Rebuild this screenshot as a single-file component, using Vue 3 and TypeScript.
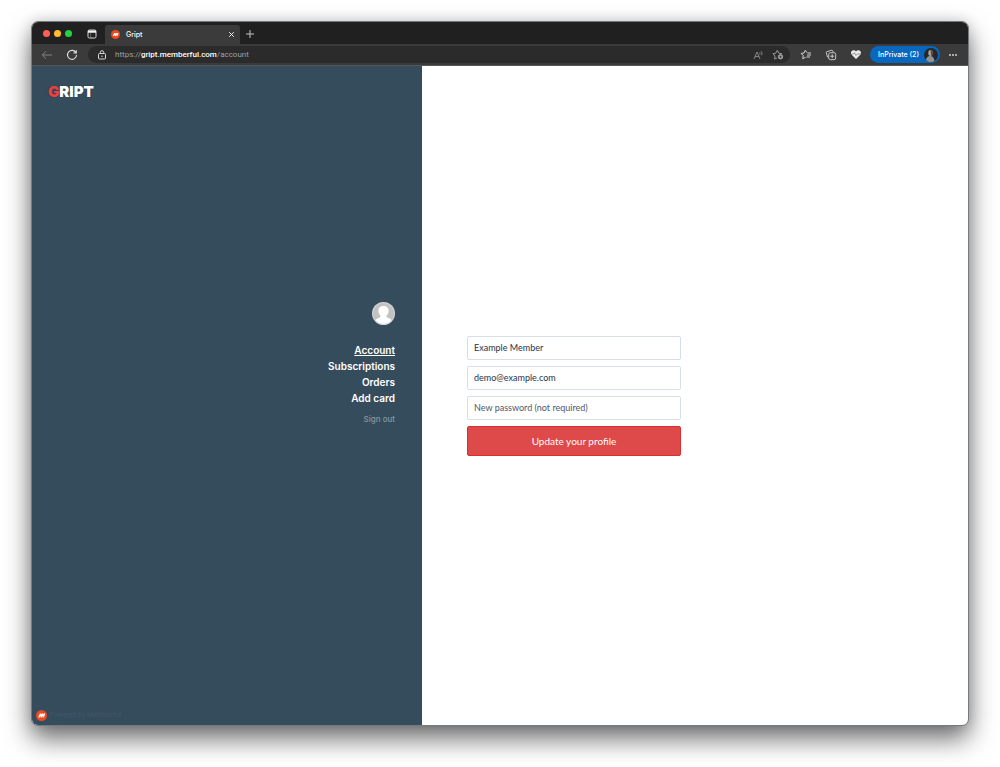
<script setup lang="ts">
import { ref } from 'vue'

interface NavItem {
  label: string
  active: boolean
}

const navItems: NavItem[] = [
  { label: 'Account', active: true },
  { label: 'Subscriptions', active: false },
  { label: 'Orders', active: false },
  { label: 'Add card', active: false },
]

const fullName = ref('Example Member')
const email = ref('demo@example.com')
const password = ref('')
</script>

<template>
  <div class="desktop">
    <div class="window">
      <header class="chrome">
        <div class="titlebar">
          <div class="lights">
            <button class="light close" aria-label="Close window"></button>
            <button class="light minimize" aria-label="Minimize window"></button>
            <button class="light zoom" aria-label="Zoom window"></button>
          </div>
          <button class="icon-button tab-menu" aria-label="Tab actions">
            <svg width="10" height="10" viewBox="0 0 10 10" fill="none">
              <rect x="1" y="1" width="8" height="8" rx="1.4" stroke="#d8d8d8" />
              <path d="M1 1.600h8v2.200H1z" fill="#f2f2f2" />
              <path d="M3.700 4v5" stroke="#999" stroke-width=".6" />
            </svg>
          </button>
          <div class="tab">
            <svg width="9" height="9" viewBox="0 0 20 20">
              <circle cx="10" cy="10" r="10" fill="#f0481f" />
              <path d="M4 13.500 7 6.500h2.300l-.6 2 1.900-2h2.200l-.6 2 2-2H17l-2.800 7h-2.300l1.300-3.300-3 3.300H8l1.300-3.300-3 3.300z" fill="#fff" />
            </svg>
            <span class="tab-title">Gript</span>
            <button class="icon-button tab-close" aria-label="Close tab">
              <svg width="7" height="7" viewBox="0 0 7 7" fill="none" stroke="#eee">
                <path d="m1.200 1.200 4.600 4.600M5.800 1.200 1.200 5.800" />
              </svg>
            </button>
          </div>
          <button class="icon-button new-tab" aria-label="New tab">
            <svg width="10" height="10" viewBox="0 0 10 10" fill="none" stroke="#c4c4c4">
              <path d="M5 1v8M1 5h8" />
            </svg>
          </button>
        </div>

        <div class="toolbar">
          <button class="icon-button back" aria-label="Back">
            <svg width="12" height="10" viewBox="0 0 12 10" fill="none" stroke="#858585">
              <path d="M11 5H1.500M5 1.300 1.300 5 5 8.700" />
            </svg>
          </button>
          <button class="icon-button reload" aria-label="Reload">
            <svg width="12" height="12" viewBox="0 0 12 12" fill="none" stroke="#dedede" stroke-width="1.1">
              <path d="M10 3.800A4.500 4.500 0 1 0 10.500 6M10.300 1.200V4H7.500" />
            </svg>
          </button>
          <div class="address">
            <svg width="10" height="10" viewBox="0 0 10 10" fill="none" stroke="#d8d8d8">
              <rect x="1.500" y="3.500" width="7" height="5.500" rx="1" />
              <path d="M3.300 3.500V2.400a1.700 1.700 0 0 1 3.400 0v1.100" />
              <circle cx="5" cy="6.200" r=".7" fill="#d8d8d8" stroke="none" />
            </svg>
            <a class="url" href="#account">https://<b>gript.memberful.com</b>/account</a>
            <button class="icon-button" aria-label="Read aloud">
              <svg width="11" height="10" viewBox="0 0 11 10" fill="none" stroke="#9b9b9b" stroke-width=".8">
                <path d="M1 9 4 2l3 7M2 6.600h4M6.500 2.600c.6.500.6 1.400.3 2M7.800 1.200c1.300 1 1.500 2.600.8 4" />
              </svg>
            </button>
            <button class="icon-button" aria-label="Add to favorites">
              <svg width="12" height="11" viewBox="0 0 12 11" fill="none" stroke="#a5a5a5" stroke-width=".9">
                <path d="M5 9 2.600 10l.4-3L1 4.700l2.700-.5L5.300 1.300l1.500 2.900 3.200.5" />
                <circle cx="8.500" cy="7.800" r="2.200" fill="#a5a5a5" />
                <path d="M8.500 6.600V9M7.300 7.800h2.400" stroke="#2b2b2b" stroke-width=".7" />
              </svg>
            </button>
          </div>
          <div class="actions">
            <button class="icon-button" aria-label="Favorites">
              <svg width="12" height="11" viewBox="0 0 12 11" fill="none" stroke="#d5d5d5" stroke-width="1">
                <path d="M7 3.700 5.300 1.300 4 4 1.200 4.400l2 2.200-.5 3L5.500 8.400M7.500 4h3.500M7 6h4M6.500 8H10" />
              </svg>
            </button>
            <button class="icon-button" aria-label="Collections">
              <svg width="12" height="12" viewBox="0 0 12 12" fill="none" stroke="#d5d5d5" stroke-width=".9">
                <path d="M3.300 8.500 2.500 8 1.300 4Q1 3 2 2.600L6.500 1.300q1-.2 1.400.7l.3 1" />
                <rect x="3.700" y="3.700" width="7" height="7" rx="1.700" />
                <path d="M7.200 5.200v4M5.200 7.200h4" />
              </svg>
            </button>
            <button class="icon-button" aria-label="Browser essentials">
              <svg width="12" height="11" viewBox="0 0 12 11">
                <path d="M6 10 1.700 5.800C.4 4.500.8 2 2.600 1.400 4 .9 5.300 1.500 6 2.500c.7-1 2-1.600 3.400-1.100 1.800.6 2.200 3.100.9 4.400z" fill="#ececec" />
                <path d="M1 5h2.500l1-1.300L6 6.500 7.300 5H11" fill="none" stroke="#777" stroke-width=".7" />
              </svg>
            </button>
          </div>
          <button class="profile">
            <span>InPrivate (2)</span>
            <svg width="14" height="14" viewBox="0 0 14 14">
              <circle cx="7" cy="7" r="7" fill="#272727" />
              <path d="M2 12c.5-3 2-4 4-4s4 1 4.500 5A7 7 0 0 1 2 12" fill="#929292" />
              <ellipse cx="6.500" cy="5" rx="2.200" ry="3" fill="#b5aaa3" />
              <path d="M6.500 2c3 0 3 5 .5 6z" fill="#514b48" />
            </svg>
          </button>
          <button class="icon-button more" aria-label="Settings and more">
            <svg width="10" height="4" viewBox="0 0 10 4" fill="#e2e2e2">
              <circle cx="2" cy="2" r=".9" /><circle cx="5" cy="2" r=".9" /><circle cx="8" cy="2" r=".9" />
            </svg>
          </button>
        </div>
      </header>

      <div class="page">
        <aside class="sidebar">
          <a class="logo" href="#home"><span>G</span>RIPT</a>
          <div class="member">
            <svg class="avatar" width="23" height="23" viewBox="0 0 24 24">
              <defs>
                <clipPath id="avatar-clip"><circle cx="12" cy="12" r="11" /></clipPath>
              </defs>
              <circle cx="12" cy="12" r="12" fill="#d6d6d6" />
              <circle cx="12" cy="12" r="11" fill="#c2c2c2" />
              <g clip-path="url(#avatar-clip)" fill="#fff">
                <path d="M12 4.200c3.600 0 5.500 2.200 5.300 5.300-.1 2.200-1 3.600-2.100 4.700-.1 1.500.4 1.900 2 2.500 2.600.9 4 2.500 4.500 7.300H2.300c.5-4.800 1.900-6.400 4.500-7.300 1.600-.6 2.100-1 2-2.500-1.100-1.100-2-2.500-2.100-4.700-.2-3.100 1.700-5.300 5.300-5.300" />
              </g>
            </svg>
            <nav class="nav" aria-label="Account">
              <a
                v-for="item in navItems"
                :key="item.label"
                href="#"
                :class="{ active: item.active }"
              >{{ item.label }}</a>
            </nav>
            <a class="sign-out" href="#">Sign out</a>
          </div>
          <a class="powered" href="#">
            <svg width="11" height="11" viewBox="0 0 20 20">
              <circle cx="10" cy="10" r="10" fill="#f0481f" />
              <path d="M4 13.500 7 6.500h2.300l-.6 2 1.900-2h2.200l-.6 2 2-2H17l-2.800 7h-2.300l1.300-3.300-3 3.300H8l1.300-3.300-3 3.300z" fill="#fff" />
            </svg>
            <span>Powered by Memberful</span>
          </a>
        </aside>

        <main class="content">
          <form class="form" @submit.prevent>
            <input v-model="fullName" type="text" aria-label="Full name" />
            <input v-model="email" type="email" aria-label="Email" />
            <input
              v-model="password"
              type="password"
              aria-label="New password"
              placeholder="New password (not required)"
            />
            <button type="submit">Update your profile</button>
          </form>
        </main>
      </div>
    </div>
  </div>
</template>

<style>
html,
body {
  background: #fff;
}
</style>

<style scoped>
* {
  box-sizing: border-box;
}

.desktop {
  display: flex;
  min-height: 100vh;
  padding: 21px 31px 41px;
  overflow: hidden;
  font-family: Inter, 'Liberation Sans', sans-serif;
}

.window {
  display: flex;
  flex: 1;
  flex-direction: column;
  overflow: hidden;
  border: 1px solid #747a7e;
  border-radius: 7px;
  background: #fff;
  box-shadow: 0 13px 26px rgba(0, 0, 0, 0.56), 0 0 14px rgba(0, 0, 0, 0.14);
}

button {
  padding: 0;
  border: 0;
  background: none;
  font-family: inherit;
}

a {
  color: inherit;
  text-decoration: none;
}

svg {
  display: block;
  flex: none;
}

.icon-button {
  display: grid;
  flex: none;
  place-items: center;
}

.chrome {
  border-bottom: 1px solid #565656;
  background: #202020;
}

.titlebar {
  display: flex;
  align-items: center;
  height: 22px;
  padding-left: 11px;
}

.lights {
  display: flex;
  gap: 4px;
}

.light {
  width: 7px;
  height: 7px;
  border-radius: 50%;
}

.close {
  background: #ff5f57;
}

.minimize {
  background: #febc2e;
}

.zoom {
  background: #20d33f;
}

.tab-menu {
  margin: 2px 8px 0 15px;
}

.tab {
  display: flex;
  align-self: flex-end;
  align-items: center;
  gap: 6px;
  width: 135px;
  height: 19px;
  padding: 0 5px 0 6px;
  border-radius: 3px 3px 0 0;
  background: #3b3b3b;
}

.tab-title {
  flex: 1;
  color: #fff;
  font-size: 7px;
  font-weight: 500;
  line-height: 10px;
}

.new-tab {
  margin: 2px 0 0 5px;
}

.toolbar {
  display: flex;
  align-items: center;
  height: 21px;
  padding: 0 10px 0 9px;
  background: #3b3b3b;
}

.reload {
  margin: 0 10px 0 13px;
}

.address {
  display: flex;
  flex: 1;
  align-items: center;
  gap: 8px;
  height: 17px;
  padding: 0 6px 0 9px;
  border-radius: 9px;
  background: #2b2b2b;
}

.url {
  flex: 1;
  color: #a0a0a0;
  font-family: Roboto, sans-serif;
  font-size: 8px;
  line-height: 12px;
}

.url b {
  color: #fff;
  font-weight: 500;
}

.actions {
  display: flex;
  gap: 13px;
  margin: 0 8px 0 10px;
}

.profile {
  display: flex;
  align-items: center;
  gap: 5px;
  height: 17px;
  padding: 0 2px 0 8px;
  border-radius: 9px;
  background: #0868c0;
  color: #fff;
  font-size: 7px;
  font-weight: 500;
  white-space: nowrap;
}

.more {
  margin-left: 8px;
}

.page {
  display: grid;
  flex: 1;
  grid-template-columns: 5fr 7fr;
}

.sidebar {
  display: flex;
  flex-direction: column;
  justify-content: space-between;
  background: #354c5c;
  color: #fff;
}

.logo {
  align-self: flex-start;
  margin: 17px 0 0 16px;
  font-size: 15px;
  font-weight: 900;
  line-height: 18px;
  text-shadow: 0 0 1px #1f303d;
}

.logo span {
  color: #ef4040;
}

.member {
  display: flex;
  flex-direction: column;
  align-items: flex-end;
  margin-bottom: 83px;
  padding-right: 27px;
}

.nav {
  display: flex;
  flex-direction: column;
  align-items: flex-end;
  margin: 17px 0 7px;
  font-size: 10px;
  font-weight: 600;
  line-height: 16px;
}

.nav .active {
  text-decoration: underline;
}

.sign-out {
  color: #8797a2;
  font-size: 8px;
  font-weight: 500;
  line-height: 12px;
}

.powered {
  display: flex;
  align-items: center;
  align-self: flex-start;
  gap: 2px;
  margin: 0 0 4px 4px;
  color: #43566a;
  font-family: Roboto, sans-serif;
  font-size: 7px;
  line-height: 12px;
}

.content {
  display: flex;
  align-items: center;
  padding: 0 45px;
}

.form {
  display: flex;
  flex: 0 1 214px;
  flex-direction: column;
  gap: 6px;
  font-family: Lato, sans-serif;
}

.form input {
  width: 100%;
  height: 24px;
  padding: 0 6px;
  border: 1px solid #d6dfe9;
  border-radius: 2px;
  background: #fff;
  color: #26334c;
  font-family: inherit;
  font-size: 9px;
  line-height: 12px;
}

.form input::placeholder {
  color: #4b586e;
  opacity: 1;
}

.form button {
  height: 30px;
  border: 1px solid #d92f31;
  border-radius: 2px;
  background: #de4949;
  color: #fff;
  font-size: 10px;
  line-height: 14px;
}
</style>
